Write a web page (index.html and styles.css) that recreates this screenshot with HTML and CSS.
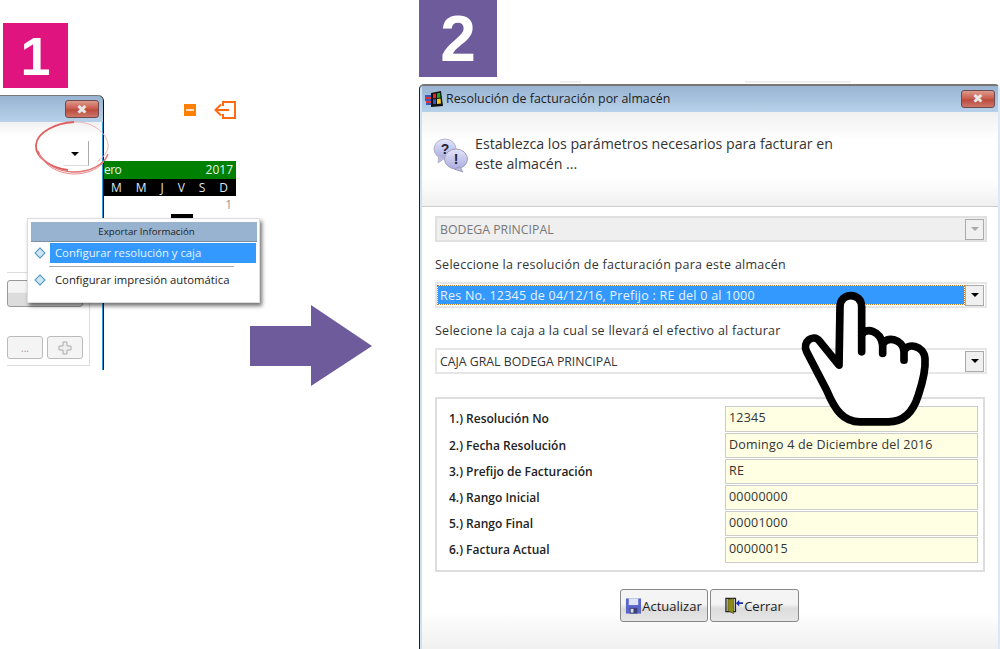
FILE: index.html
```html
<!DOCTYPE html>
<html lang="en">
<head>
    <meta charset="UTF-8">
    <title>Resolución de facturación por almacén</title>
    <link rel="stylesheet" href="styles.css">
</head>
<body>
    <div class="canvas">
        <div class="badge badge-one">1</div>
        <div class="badge badge-two">2</div>

        <!-- step 1: cropped window behind the menu -->
        <div class="old-window">
            <div class="old-title"><span class="close-btn old-close">&#10006;</span></div>
            <div class="old-head"></div>
            <div class="old-corner"><span class="mini-arrow"></span></div>
            <div class="old-panel">
                <div class="old-button"></div>
                <div class="old-small">
                    <span class="old-mini">...</span>
                    <span class="old-mini">
                        <svg width="14" height="14" viewBox="0 0 14 14"><path d="M5 1h4v4h4v4H9v4H5V9H1V5h4z" fill="#eee" stroke="#aaa"/></svg>
                    </span>
                </div>
            </div>
        </div>

        <svg class="red-circle" width="80" height="56" viewBox="0 0 80 56" fill="none">
            <path d="M40 1C22 2 3 11 2 24c-1 13 16 23 32 25" stroke="#df5f5f" stroke-width="1.800"/>
            <path d="M40 1c16-1 32 9 34 22 1 6-3 12-10 17" stroke="#f0b4b4" stroke-width="1"/>
            <path d="M4 30c4 12 20 21 36 21 16 0 30-7 34-18" stroke="#e27070" stroke-width="1.400"/>
            <path d="M5 33c6 12 20 20 35 20 14 0 27-6 32-15" stroke="#e98a8a" stroke-width="1"/>
        </svg>

        <div class="top-icons">
            <span class="minimize"></span>
            <svg width="24" height="20" viewBox="0 0 24 20" fill="none" stroke="#ff6a13" stroke-width="2">
                <path d="M10 6V2h12v16H10v-4"/>
                <path d="M16 10H3M8 4.500 2.500 10 8 15.500"/>
            </svg>
        </div>

        <div class="calendar">
            <div class="cal-month"><span class="cal-cut">ero</span><span>2017</span></div>
            <div class="cal-days"><span>M</span><span>M</span><span>J</span><span>V</span><span>S</span><span>D</span></div>
            <div class="cal-first">1</div>
            <div class="cal-mark"></div>
        </div>

        <div class="context-menu">
            <div class="menu-head">Exportar Información</div>
            <div class="menu-item">
                <span class="diamond"></span>
                <span class="menu-label active">Configurar resolución y caja</span>
            </div>
            <div class="menu-sep"></div>
            <div class="menu-item">
                <span class="diamond"></span>
                <span class="menu-label">Configurar impresión automática</span>
            </div>
        </div>

        <svg class="big-arrow" width="122" height="81" viewBox="0 0 122 81">
            <path d="M0 21h61V0l61 41-61 40V61H0z" fill="#6d5b9c"/>
        </svg>

        <span class="behind behind-a"></span>
        <span class="behind behind-b"></span>

        <!-- step 2: dialog -->
        <div class="dialog">
            <div class="dialog-title">
                <svg class="app-icon" width="18" height="16" viewBox="0 0 18 16">
                    <path d="M0 4h6v2H0zM0 8h6v2H0zM1 12h6v2H1z" fill="#3a5bb8"/>
                    <path d="M0 6h6v2H0zM1 10h6v2H1z" fill="#d33"/>
                    <path d="M6 2l10-2 2 15-12 1z" fill="#111"/>
                    <path d="M8 3l3-.5V7l-3 .500z" fill="#e22"/>
                    <path d="M12 2.300l3-.5.500 4.700-3.500.400z" fill="#2a2"/>
                    <path d="M8 8.500l3-.4V13l-3 .3z" fill="#35c"/>
                    <path d="M12 8l3.600-.4.400 5-4 .3z" fill="#ec2"/>
                </svg>
                <span>Resolución de facturación por almacén</span>
                <span class="close-btn dialog-close">&#10006;</span>
            </div>

            <div class="dialog-head">
                <svg class="help-icon" width="36" height="36" viewBox="0 0 36 36">
                    <defs>
                        <linearGradient id="bubble" x1="0" y1="0" x2="0" y2="1">
                            <stop offset="0" stop-color="#e4e5fa"/>
                            <stop offset="1" stop-color="#a9acdf"/>
                        </linearGradient>
                    </defs>
                    <ellipse cx="12" cy="12" rx="11" ry="10" fill="url(#bubble)" stroke="#b4b4cc"/>
                    <path d="M6 19l-1 7 7-5z" fill="#b9bce6" stroke="#b4b4cc"/>
                    <ellipse cx="23" cy="22" rx="11.500" ry="10" fill="url(#bubble)" stroke="#a0a0bb"/>
                    <path d="M27 30l3 5-9-3z" fill="#b4b7e2" stroke="#a0a0bb"/>
                    <text x="12" y="17" class="help-mark" text-anchor="middle">?</text>
                    <text x="23" y="27" class="help-mark" text-anchor="middle">!</text>
                </svg>
                <p>Establezca los parámetros necesarios para facturar en este almacén ...</p>
            </div>

            <div class="dialog-body">
                <div class="combo combo-disabled">
                    <span class="combo-text">BODEGA PRINCIPAL</span>
                    <span class="combo-btn"><span class="mini-arrow grey"></span></span>
                </div>
                <div class="field-label">Seleccione la resolución de facturación para este almacén</div>
                <div class="combo combo-focus">
                    <span class="combo-text">Res No. 12345 de 04/12/16, Prefijo : RE del 0 al 1000</span>
                    <span class="combo-btn"><span class="mini-arrow"></span></span>
                </div>
                <div class="field-label">Selecione la caja a la cual se llevará el efectivo al facturar</div>
                <div class="combo">
                    <span class="combo-text">CAJA GRAL BODEGA PRINCIPAL</span>
                    <span class="combo-btn"><span class="mini-arrow"></span></span>
                </div>

                <div class="params">
                    <div class="param"><label>1.) Resolución No</label><span class="param-value">12345</span></div>
                    <div class="param"><label>2.) Fecha Resolución</label><span class="param-value">Domingo 4 de Diciembre del 2016</span></div>
                    <div class="param"><label>3.) Prefijo de Facturación</label><span class="param-value">RE</span></div>
                    <div class="param"><label>4.) Rango Inicial</label><span class="param-value">00000000</span></div>
                    <div class="param"><label>5.) Rango Final</label><span class="param-value">00001000</span></div>
                    <div class="param"><label>6.) Factura Actual</label><span class="param-value">00000015</span></div>
                </div>
            </div>

            <div class="dialog-foot">
                <button class="action action-save">
                    <svg width="17" height="18" viewBox="0 0 18 18">
                        <path d="M1 1h16v16H1z" fill="#5a66c8"/>
                        <path d="M4 1h10v7H4z" fill="#dfe3f7"/>
                        <path d="M5 11h8v6H5z" fill="#3b3f78"/>
                        <path d="M6 12h3v4H6z" fill="#d8d8e8"/>
                    </svg>Actualizar
                </button>
                <button class="action action-close">
                    <svg width="19" height="18" viewBox="0 0 20 18">
                        <path d="M1 1h10v14H1z" fill="none" stroke="#222" stroke-width="1.400"/>
                        <path d="M3 2l6-1v16l-6-3z" fill="#8a8a14" stroke="#333" stroke-width=".6"/>
                        <path d="M19 5h-4V2.500L11.500 6l3.500 3.500V7h4z" fill="#1a2fb0"/>
                    </svg>Cerrar
                </button>
            </div>
        </div>

        <svg class="hand" width="130" height="137" viewBox="120 60 390 410">
            <path d="M305 245V110C305 65 240 65 240 110L237 285L178 212C160 190 125 215 140 245L200 360C225 420 250 455 300 455H385C430 455 460 425 475 375C490 330 497 290 495 265C492 225 440 215 432 245C430 205 375 195 368 225C362 180 315 170 305 195M432 245V270M368 225V250" fill="#fff" stroke="#000" stroke-width="23" stroke-linecap="round" stroke-linejoin="round"/>
        </svg>
    </div>
</body>
</html>
```

FILE: styles.css
```css
* {
    box-sizing: border-box;
}
body {
    margin: 0;
    background: #fff;
    font-family: "Open Sans", "Noto Sans", sans-serif;
    color: #333;
}
.canvas {
    position: relative;
    width: 1000px;
    height: 649px;
    overflow: hidden;
    background: #fff;
}

/* step numbers */
.badge {
    position: absolute;
    display: flex;
    align-items: center;
    justify-content: center;
    color: #fff;
    font-family: "Liberation Sans", Arial, sans-serif;
    font-weight: bold;
}
.badge-one {
    left: 3px;
    top: 23px;
    width: 65px;
    height: 65px;
    background: #e0147f;
    font-size: 54px;
}
.badge-two {
    left: 419px;
    top: 0;
    width: 78px;
    height: 77px;
    background: #6d5b9c;
    font-size: 64px;
}

/* shared bits */
.close-btn {
    display: flex;
    align-items: center;
    justify-content: center;
    width: 34px;
    height: 18px;
    border: 1px solid #6b4a50;
    border-radius: 3px;
    background: linear-gradient(#dd9a8c, #c9584a 50%, #b84a3c 55%, #d0776a);
    color: #e8e8e8;
    font-family: "DejaVu Sans", sans-serif;
    font-size: 13px;
    line-height: 1;
}
.mini-arrow {
    display: block;
    width: 0;
    height: 0;
    border-left: 4px solid transparent;
    border-right: 4px solid transparent;
    border-top: 4px solid #000;
}
.mini-arrow.grey {
    border-top-color: #aaa;
}

/* step 1 window */
.old-window {
    position: absolute;
    left: 0;
    top: 95px;
    width: 104px;
    height: 275px;
    border-right: 1px solid #111;
    border-top-right-radius: 6px;
    box-shadow: inset -1px 0 0 #2f9fdc;
    background: #fff;
}
.old-title {
    display: flex;
    justify-content: flex-end;
    align-items: center;
    height: 27px;
    padding-right: 4px;
    border-top: 1px solid #777;
    border-top-right-radius: 6px;
    background: linear-gradient(#98b4d2, #b8d1ea);
}
.old-head {
    width: 102px;
    height: 13px;
    background: linear-gradient(#f0f0f0, #fff);
}
.old-corner {
    display: flex;
    justify-content: flex-end;
    align-items: flex-end;
    width: 26px;
    height: 25px;
    margin: 6px 0 0 63px;
    padding: 0 9px 9px 0;
    border-right: 1px solid #aaa;
    border-bottom: 1px solid #ddd;
}
.old-panel {
    width: 83px;
    height: 94px;
    margin: 106px 0 0 7px;
    padding-top: 7px;
    border-top: 1px solid #ddd;
    border-right: 1px solid #ddd;
    border-bottom: 1px solid #ddd;
}
.old-button {
    width: 76px;
    height: 27px;
    border: 1px solid #999;
    border-radius: 3px;
    background: linear-gradient(#f4f4f4 45%, #dcdcdc 50%);
}
.old-small {
    display: flex;
    gap: 4px;
    margin-top: 29px;
}
.old-mini {
    display: flex;
    align-items: center;
    justify-content: center;
    width: 36px;
    height: 23px;
    border: 1px solid #bbb;
    border-radius: 3px;
    background: #f4f4f4;
    color: #999;
    font-size: 10px;
}
.red-circle {
    position: absolute;
    left: 34px;
    top: 121px;
}
.top-icons {
    position: absolute;
    left: 184px;
    top: 100px;
    display: flex;
    align-items: center;
    gap: 17px;
}
.minimize {
    position: relative;
    display: block;
    width: 12px;
    height: 12px;
    background: #ff7f00;
}
.minimize::after {
    content: "";
    position: absolute;
    left: 2px;
    right: 2px;
    top: 5px;
    height: 2px;
    background: #ffe0c0;
}
.calendar {
    position: absolute;
    left: 104px;
    top: 161px;
    width: 132px;
    font-size: 12px;
}
.cal-month {
    display: flex;
    justify-content: space-between;
    height: 18px;
    padding: 0 3px 0 0;
    background: #008000;
    color: #e8f4e8;
    line-height: 18px;
}
.cal-cut {
    letter-spacing: -0.6px;
}
.cal-days {
    display: flex;
    justify-content: space-between;
    height: 17px;
    padding: 0 8px 0 7px;
    background: #000;
    color: #dfe6ee;
    line-height: 17px;
}
.cal-first {
    padding: 1px 4px 0 0;
    text-align: right;
    color: #999;
    line-height: 16px;
}
.cal-mark {
    width: 22px;
    height: 4px;
    margin: 1px 0 0 67px;
    background: #000;
}

/* context menu */
.context-menu {
    position: absolute;
    left: 27px;
    top: 218px;
    width: 233px;
    height: 85px;
    padding: 3px 2px 3px 3px;
    background: #fff;
    border: 1px solid #ddd;
    box-shadow: 2px 3px 4px rgba(0, 0, 0, 0.55);
    font-size: 11.300px;
    color: #222;
}
.menu-head {
    height: 20px;
    padding-left: 5px;
    background: #97b3d0;
    border-bottom: 1px solid #7f8fa3;
    text-align: center;
    font-size: 9.700px;
    line-height: 19px;
}
.menu-item {
    display: flex;
    align-items: center;
    height: 20px;
    margin-top: 1px;
}
.diamond {
    width: 8px;
    height: 8px;
    margin: 0 6px 0 5px;
    transform: rotate(45deg);
    background: #cfe6f2;
    border: 1px solid #4a94c0;
}
.menu-label {
    flex: 1;
    height: 20px;
    margin-right: 1px;
    padding-left: 5px;
    line-height: 20px;
    white-space: nowrap;
}
.menu-label.active {
    background: #3399ff;
    color: #e8f3ff;
}
.menu-sep {
    height: 1px;
    margin: 3px 23px 3px 18px;
    background: #aaa;
}
.big-arrow {
    position: absolute;
    left: 250px;
    top: 305px;
}
.behind {
    position: absolute;
    top: 81px;
    height: 2px;
    background: #eee;
}
.behind-a {
    left: 560px;
    width: 21px;
}
.behind-b {
    left: 745px;
    width: 106px;
}

/* step 2 dialog */
.dialog {
    position: absolute;
    left: 419px;
    top: 84px;
    width: 581px;
    height: 565px;
    display: flex;
    flex-direction: column;
    padding-left: 2px;
    border: 2px solid #dbe8f5;
    border-top: 2px solid #777;
    border-left: 1px solid #222;
    border-bottom: 0;
    border-radius: 5px 5px 0 0;
    background: #cfe0f2;
}
.dialog-title {
    display: flex;
    align-items: center;
    gap: 3px;
    height: 26px;
    padding: 0 3px 0 3px;
    background: linear-gradient(#98b4d2, #b8d1ea);
    font-size: 12.400px;
    color: #222;
}
.dialog-close {
    margin-left: auto;
}
.dialog-head {
    display: flex;
    gap: 6px;
    height: 96px;
    padding: 22px 0 0 11px;
    background: linear-gradient(#f0f0f0, #fff 30%, #fff 70%, #f0f0f0);
    border-bottom: 1px solid #ccc;
}
.dialog-head p {
    width: 380px;
    margin: 0;
    font-size: 14.200px;
    line-height: 20px;
    color: #333;
}
.help-icon {
    margin-top: 3px;
}
.help-mark {
    font-family: "Liberation Sans", Arial, sans-serif;
    font-size: 14px;
    font-weight: bold;
    fill: #223;
}
.dialog-body {
    flex: 1;
    padding: 9px 11px 0 13px;
    background: #fff;
    font-size: 12.500px;
}
.combo {
    display: flex;
    align-items: center;
    height: 26px;
    padding: 2px 1px 2px 1px;
    background: #fff;
    border: 2px solid #e6e6e6;
    font-size: 12.300px;
}
.combo-text {
    flex: 1;
    height: 100%;
    padding-left: 2px;
    line-height: 20px;
    white-space: nowrap;
}
.combo-btn {
    display: flex;
    align-items: center;
    justify-content: center;
    width: 19px;
    height: 21px;
    margin-left: 1px;
    background: #f0f0f0;
    border: 1px solid #aaa;
}
.combo-disabled {
    background: #efefef;
    border-color: #e0e0e0;
    color: #777;
}
.combo-focus .combo-text {
    background: #3399ff;
    outline: 1px dotted #c87a20;
    color: #e8f3ff;
    font-size: 12.500px;
    letter-spacing: 0.25px;
}
.field-label {
    height: 40px;
    padding-top: 14px;
    line-height: 18px;
    letter-spacing: 0.27px;
}
.params {
    display: flex;
    flex-direction: column;
    gap: 1px;
    height: 175px;
    margin: 23px 2px 0 0;
    padding: 7px 5px 0 12px;
    border: 2px solid #ddd;
}
.param {
    display: flex;
    justify-content: space-between;
    align-items: center;
    height: 25.200px;
    font-size: 12px;
}
.param label {
    font-weight: 600;
    color: #222;
}
.param-value {
    width: 253px;
    height: 100%;
    padding-left: 3px;
    background: #ffffe4;
    border: 1px solid #ccc;
    font-size: 12.500px;
    letter-spacing: 0.2px;
    line-height: 22px;
    white-space: nowrap;
}
.dialog-foot {
    display: flex;
    justify-content: center;
    gap: 2px;
    height: 77px;
    padding: 17px 2px 0 0;
    background: linear-gradient(#fff 50%, #f0f0f0);
}
.action {
    display: flex;
    align-items: center;
    justify-content: center;
    height: 33px;
    padding: 0;
    border: 1px solid #888;
    border-radius: 3px;
    background: linear-gradient(#f4f4f4 45%, #dcdcdc 60%, #e6e6e6);
    font-family: inherit;
    font-size: 13px;
    color: #222;
}
.action-save {
    width: 88px;
}
.action-close {
    width: 89px;
}
.hand {
    position: absolute;
    left: 800px;
    top: 290px;
}
```
